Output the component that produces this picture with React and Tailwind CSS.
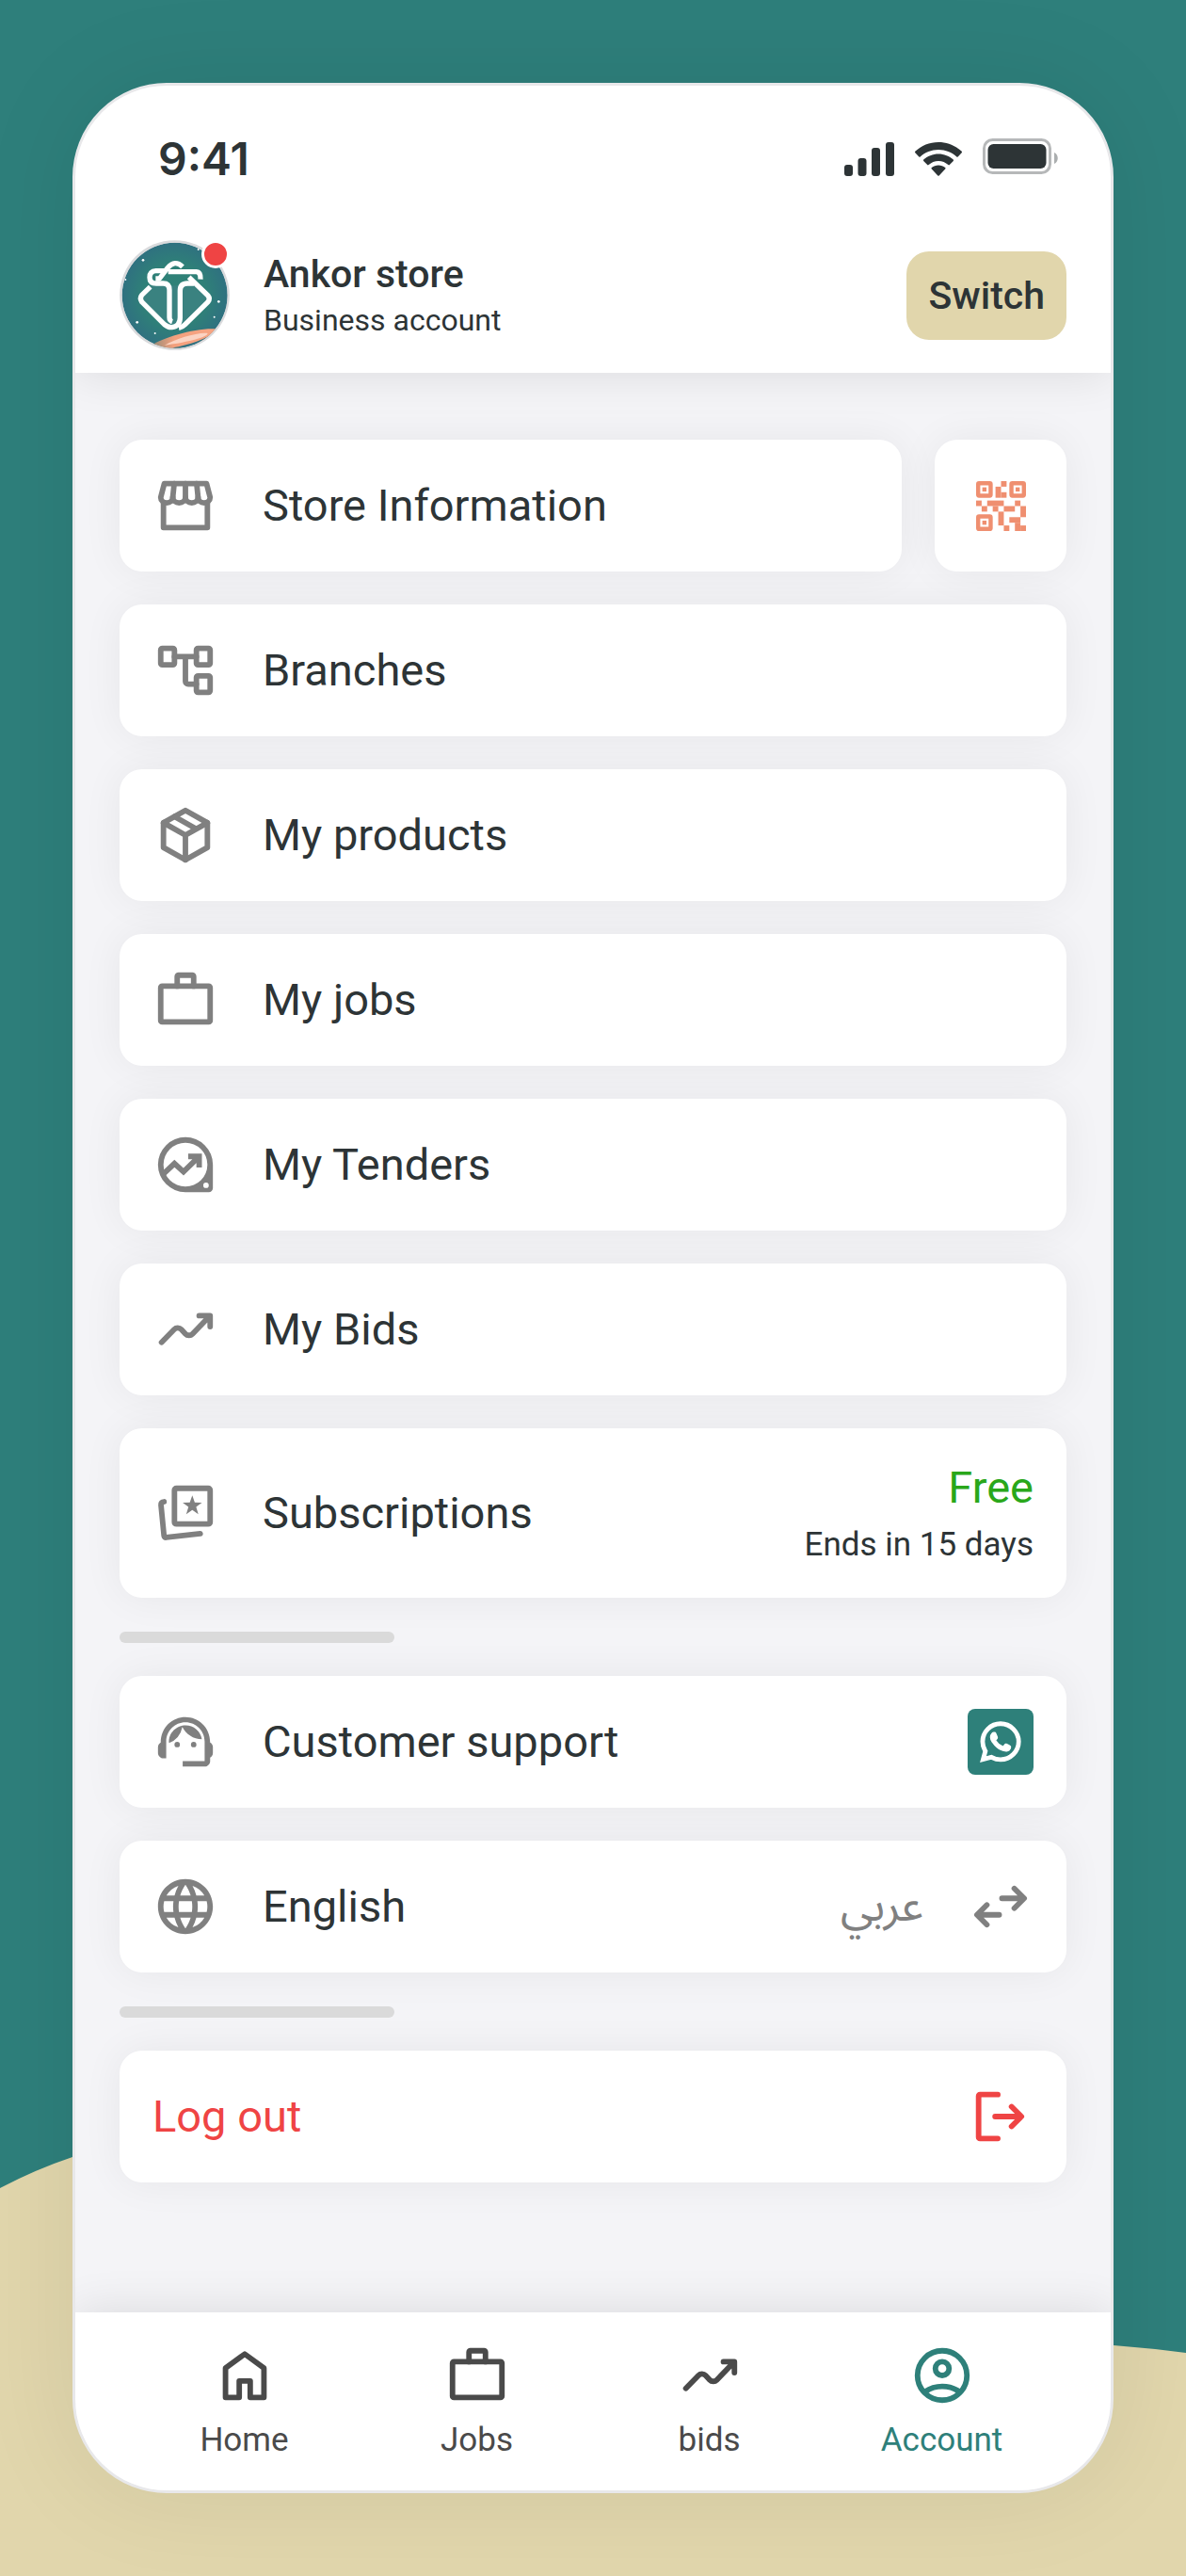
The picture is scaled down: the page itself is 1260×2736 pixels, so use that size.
import React from "react";
import { MdSupportAgent, MdLanguage } from "react-icons/md";
import { FaWhatsapp } from "react-icons/fa";

function Icon({ children, className = "text-[#808080]" }) {
  return (
    <svg
      viewBox="0 0 24 24"
      aria-hidden="true"
      fill="none"
      stroke="currentColor"
      strokeWidth="2"
      strokeLinecap="round"
      strokeLinejoin="round"
      className={`size-[70px] shrink-0 ${className}`}
    >
      {children}
    </svg>
  );
}

const StoreIcon = () => (
  <Icon>
    <path d="M4.3 4h15.4l1.3 5a2.2 2 0 0 1-4.4 0 2.3 2 0 0 1-4.6 0 2.3 2 0 0 1-4.6 0A2.2 2 0 0 1 3 9z" />
    <path d="M7.9 4 7.4 9M12 4v5M16.1 4l.5 5M4 11.2V20h16v-8.800" />
  </Icon>
);

const BranchesIcon = () => (
  <Icon>
    <rect x="3" y="4" width="5" height="6" rx=".6" />
    <rect x="16" y="4" width="5" height="6" rx=".6" />
    <rect x="16" y="14" width="5" height="6" rx=".6" />
    <path d="M8 7h8M12 7v9a1 1 0 0 0 1 1h3" />
  </Icon>
);

const PackageIcon = () => (
  <Icon>
    <path d="M12 3l8 4.500v9L12 21l-8-4.500v-9z" />
    <path d="M4 7.500l8 4.500 8-4.500M12 12v9M8 5.250l8 4.500" />
  </Icon>
);

const WorkIcon = ({ className }) => (
  <Icon className={className}>
    <rect x="3" y="7" width="18" height="13" rx=".5" />
    <path d="M9 7V3.500a.5.5 0 0 1 .5-.5h5a.5.5 0 0 1 .5.5V7" />
  </Icon>
);

const TendersIcon = () => (
  <Icon>
    <path
      fill="currentColor"
      stroke="none"
      fillRule="evenodd"
      d="M12 2a10 10 0 0 1 10 10v8.500a1.500 1.500 0 0 1-1.500 1.500H12a10 10 0 0 1 0-20zm0 2a8 8 0 1 0 0 16 8 8 0 0 0 0-16zm7.500 14.500a1 1 0 1 0 0 2 1 1 0 0 0 0-2z"
    />
    <path strokeLinecap="butt" strokeLinejoin="miter" d="M3.600 15.700 8 11.600l3.300 3L16.700 9.300M13 9h4v4" />
  </Icon>
);

const TrendIcon = ({ className }) => (
  <Icon className={className}>
    <path d="M3.300 16.700 7.900 12a1.800 1.800 0 0 1 2.600 0l1.500 1.600a1.800 1.800 0 0 0 2.600 0L20.700 7.300M17 7h4v4" />
  </Icon>
);

const SubscriptionIcon = () => (
  <Icon>
    <rect x="8" y="3" width="13" height="13" rx=".7" />
    <path d="M4.200 7.900Q3 8 3.100 9.100L4.200 20.300q.1.700.8.600L17.400 19.500" />
    <path
      fill="currentColor"
      stroke="none"
      d="M14.500 5.600l.9 2.500 2.600.1-2.100 1.600.8 2.600-2.200-1.500-2.200 1.500.8-2.600-2.100-1.600 2.600-.1z"
    />
  </Icon>
);

const SwapIcon = () => (
  <Icon>
    <path d="M12.500 9h8M17 5.400 20.600 9 17 12.600M11.500 15h-8M7 11.400 3.400 15 7 18.600" />
  </Icon>
);

const LogoutIcon = () => (
  <Icon className="text-[#ef4444]">
    <path d="M11 4H4.500a.5.5 0 0 0-.5.5v15a.5.5 0 0 0 .5.5H11M10 12h9.500M16 8.400l3.600 3.600-3.600 3.600" />
  </Icon>
);

const HomeIcon = ({ className }) => (
  <Icon className={className}>
    <path d="M5 20V9.300l7-5.100 7 5.100V20h-5v-6h-4v6z" />
  </Icon>
);

const AccountIcon = ({ className }) => (
  <Icon className={className}>
    <circle cx="12" cy="12" r="9" />
    <circle cx="12" cy="9.500" r="2.500" />
    <path d="M5.800 17.900C7.500 16.700 9.600 16 12 16s4.500.7 6.200 1.900" />
  </Icon>
);

const QR_MODULES = [
  [4.5, 0, 1, 1], [3.5, 1, 1, 2], [4.5, 2, 1, 1], [0, 3.5, 1, 1], [1, 4.5, 1, 1],
  [2, 3.5, 3, 1], [3, 4.5, 1, 1], [4, 5.5, 1, 2.5], [5, 8, 1, 1], [5, 4.5, 2, 1],
  [7, 3.5, 1, 1], [8, 4.5, 1, 2], [6, 6.5, 2, 1], [7, 7.5, 1, 1.5], [8, 8, 1, 1],
];
const QR_FINDERS = [[0, 0], [6, 0], [0, 6]];

function QrIcon() {
  return (
    <svg viewBox="0 0 9 9" aria-hidden="true" className="size-[53px] text-[#ef8f70]">
      {QR_FINDERS.map(([x, y]) => (
        <g key={`${x}-${y}`}>
          <rect x={x + 0.375} y={y + 0.375} width="2.25" height="2.25" rx=".15" fill="none" stroke="currentColor" strokeWidth=".75" />
          <rect x={x + 1.125} y={y + 1.125} width=".75" height=".75" fill="currentColor" />
        </g>
      ))}
      {QR_MODULES.map(([x, y, w, h]) => (
        <rect key={`${x}-${y}`} x={x} y={y} width={w} height={h} fill="currentColor" />
      ))}
    </svg>
  );
}

function Avatar() {
  return (
    <svg viewBox="21 15 351 351" role="img" aria-label="Ankor store logo" className="size-[117px]">
      <defs>
        <radialGradient id="sky">
          <stop offset="0" stopColor="#2f8377" />
          <stop offset=".6" stopColor="#2f8078" />
          <stop offset="1" stopColor="#2f7180" />
        </radialGradient>
        <linearGradient id="comet">
          <stop offset="0" stopColor="#8f8a78" />
          <stop offset=".35" stopColor="#f4a07d" />
          <stop offset="1" stopColor="#f7a583" />
        </linearGradient>
        <clipPath id="disc">
          <circle cx="197" cy="191" r="168" />
        </clipPath>
      </defs>
      <circle cx="196.500" cy="190.500" r="175" fill="#d9dadc" />
      <g clipPath="url(#disc)">
        <circle cx="197" cy="191" r="168" fill="url(#sky)" />
        <path d="M120 352C160 325 270 292 335 299C322 325 250 352 195 362L120 370z" fill="url(#comet)" />
        <path d="M165 350C200 330 270 308 302 312C300 325 240 340 165 350z" fill="#fbd3c2" />
        <path d="M190 358C240 350 300 330 340 300L330 345L250 372z" fill="#2f7180" />
        <g fill="#fff">
          <circle cx="96" cy="79" r="4" />
          <circle cx="40" cy="141" r="3" />
          <circle cx="272" cy="45" r="3" />
          <circle cx="337" cy="211" r="4" />
          <circle cx="323" cy="260" r="3" />
          <circle cx="77" cy="277" r="4" />
          <circle cx="134" cy="312" r="3" />
        </g>
        <path d="M122 160H272L306 200L218 294H180L88 200z" fill="#3a8280" />
      </g>
      <g fill="none" stroke="#fff" strokeWidth="16" strokeLinejoin="round">
        <path d="M119 164L92 190Q84 200 92 212L164 284Q176 294 188 293Q214 290 214 262V176Q214 153 238 153H258" />
        <path d="M166 113H137Q117 114 117 134Q117 153 138 153H160Q180 153 180 174V262Q180 272 189 275" />
        <path d="M136 138H148L174 104Q197 76 222 100" />
        <path d="M176 116H266Q280 117 279 140" />
        <path d="M242 133L303 192Q311 202 303 212L230 284Q221 293 210 295" />
      </g>
    </svg>
  );
}

function StatusBar() {
  return (
    <div className="flex h-[156px] items-center justify-between pr-14 pl-[88px] text-[#2d3436]">
      <time className="font-['Inter',sans-serif] text-[48px] leading-[60px] font-semibold">9:41</time>
      <div className="flex items-center gap-[22px]" aria-hidden="true">
        <svg viewBox="0 0 53 36" className="h-9 w-[53px]" fill="currentColor">
          <rect x="0" y="24" width="9" height="12" rx="3" />
          <rect x="14.500" y="17" width="9" height="19" rx="3" />
          <rect x="29" y="6" width="9" height="30" rx="3" />
          <rect x="44" y="0" width="9" height="36" rx="3" />
        </svg>
        <svg viewBox="0 0 50 36" className="h-9 w-[50px]" fill="currentColor">
          <path d="M25 0C15.500 0 6.800 3.700.3 9.800q-.6.700 0 1.400l4 4.200q.7.600 1.400 0C10.800 10.700 17.500 7.900 25 7.900s14.200 2.800 19.300 7.500q.7.600 1.400 0l4-4.200q.6-.7 0-1.400C43.200 3.700 34.500 0 25 0z" />
          <path d="M25 12.400c-6.100 0-11.600 2.300-15.800 6.200q-.6.700 0 1.400l4 4.100q.7.700 1.400 0C17.400 21.600 21 20 25 20s7.600 1.600 10.400 4.100q.7.700 1.400 0l4-4.100q.6-.7 0-1.400c-4.200-3.900-9.700-6.200-15.800-6.200z" />
          <path d="M25 24.400c-2.800 0-5.300 1-7.200 2.700q-.7.700 0 1.400l6.500 7q.7.700 1.400 0l6.500-7q.7-.7 0-1.400c-1.900-1.700-4.400-2.700-7.200-2.700z" />
        </svg>
        <svg viewBox="0 0 80 38" className="mb-1.5 h-[38px] w-20" fill="currentColor">
          <rect x="1.500" y="1.500" width="70" height="35" rx="9" fill="none" stroke="currentColor" strokeWidth="3" opacity=".35" />
          <rect x="5.500" y="6" width="62" height="26" rx="6" />
          <path d="M76 15c5 2 5 10 0 12z" opacity=".4" />
        </svg>
      </div>
    </div>
  );
}

function Card({ children, className = "" }) {
  return (
    <button
      type="button"
      className={`flex min-h-[140px] w-full items-center rounded-3xl bg-white px-[35px] text-left text-[47px] leading-14 shadow-[0_0_44px_rgba(0,0,0,0.06)] ${className}`}
    >
      {children}
    </button>
  );
}

function MenuRow({ icon, label, children }) {
  return (
    <Card className="gap-[47px]">
      {icon}
      <span className="flex-1">{label}</span>
      {children}
    </Card>
  );
}

function Divider() {
  return <hr className="mt-px h-3 w-[292px] rounded-full border-0 bg-[#dadada]" />;
}

const MENU = [
  ["Branches", <BranchesIcon />],
  ["My products", <PackageIcon />],
  ["My jobs", <WorkIcon />],
  ["My Tenders", <TendersIcon />],
  ["My Bids", <TrendIcon />],
];

const TABS = [
  ["Home", HomeIcon, false],
  ["Jobs", WorkIcon, false],
  ["bids", TrendIcon, false],
  ["Account", AccountIcon, true],
];

export default function App() {
  return (
    <div className="relative isolate flex min-h-screen flex-col bg-[#2e7f7b] px-[77px] py-[88px] font-['Roboto',sans-serif] text-[#2d3436]">
      <svg
        aria-hidden="true"
        viewBox="0 0 1260 500"
        preserveAspectRatio="none"
        className="absolute inset-x-0 bottom-0 -z-10 h-[500px] w-full"
      >
        <path d="M0 88Q38 68 77 55C400 -40 750 240 1183 255Q1222 258 1260 263V500H0z" fill="#e1d6ac" />
      </svg>

      <div className="flex flex-1 flex-col overflow-hidden rounded-[100px] border-[3px] border-[#e8e8ea] bg-[#f4f4f7] shadow-[0_0_110px_rgba(0,0,0,0.08)]">
        <header className="z-10 bg-white shadow-[0_0_47px_rgba(0,0,0,0.11)]">
          <StatusBar />
          <div className="flex items-center px-[47px] pt-2 pb-6">
            <div className="relative">
              <Avatar />
              <span className="absolute top-0 right-0 size-[30px] rounded-full border-[3px] border-white bg-[#ef4444]" />
            </div>
            <div className="ml-9 flex-1">
              <h1 className="text-[41px] leading-[52px] font-medium">Ankor store</h1>
              <p className="text-[32px] leading-[46px]">Business account</p>
            </div>
            <button type="button" className="h-[94px] rounded-3xl bg-[#e1d6ac] px-[23px] text-[41px] leading-12 font-medium">
              Switch
            </button>
          </div>
        </header>

        <main className="flex flex-1 flex-col gap-[35px] px-[47px] pt-[71px] pb-[70px]">
          <div className="flex gap-[35px]">
            <MenuRow icon={<StoreIcon />} label="Store Information" />
            <button
              type="button"
              aria-label="Show QR code"
              className="flex w-[140px] shrink-0 items-center justify-center rounded-3xl bg-white shadow-[0_0_44px_rgba(0,0,0,0.06)]"
            >
              <QrIcon />
            </button>
          </div>
          {MENU.map(([label, icon]) => (
            <MenuRow key={label} icon={icon} label={label} />
          ))}
          <MenuRow icon={<SubscriptionIcon />} label="Subscriptions">
            <span className="flex flex-col gap-3 py-[35px] text-right">
              <span className="text-[#29a71a]">Free</span>
              <span className="text-[35px] leading-[42px]">Ends in 15 days</span>
            </span>
          </MenuRow>
          <Divider />
          <MenuRow icon={<MdSupportAgent aria-hidden="true" className="size-[70px] shrink-0 text-[#808080]" />} label="Customer support">
            <span className="flex size-[70px] items-center justify-center rounded-lg bg-[#2e807a] text-white">
              <FaWhatsapp aria-label="WhatsApp" className="size-12 overflow-visible stroke-current stroke-[14px]" />
            </span>
          </MenuRow>
          <MenuRow icon={<MdLanguage aria-hidden="true" className="size-[70px] shrink-0 text-[#808080]" />} label="English">
            <span lang="ar" dir="rtl" className="font-['Noto_Sans_Arabic','DejaVu_Sans',sans-serif] text-[47px] text-[#808080]">
              عربي
            </span>
            <SwapIcon />
          </MenuRow>
          <Divider />
          <Card className="justify-between text-[#ef4444]">
            Log out
            <LogoutIcon />
          </Card>
        </main>

        <nav className="z-10 grid grid-cols-4 bg-white px-14 pt-8 pb-[30px] text-[#4a4a4a] shadow-[0_0_47px_rgba(0,0,0,0.11)]">
          {TABS.map(([label, TabIcon, active]) => (
            <a
              key={label}
              href={`#${label.toLowerCase()}`}
              aria-current={active ? "page" : undefined}
              className={`flex flex-col items-center gap-2.5 text-[35px] leading-[47px] ${active ? "text-[#2e807a]" : ""}`}
            >
              <TabIcon className="text-current" />
              {label}
            </a>
          ))}
        </nav>
      </div>
    </div>
  );
}
